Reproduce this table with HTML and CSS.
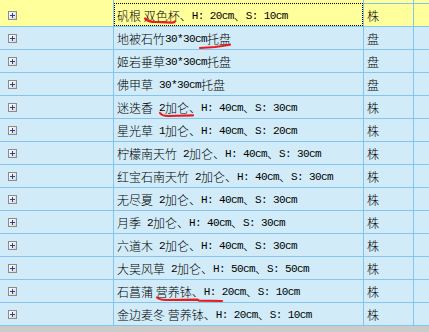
FILE: index.html
```html
<!DOCTYPE html>
<html lang="zh">
<head>
<meta charset="utf-8">
<link rel="stylesheet" href="styles.css">
</head>
<body>
<div class="wrap">
  <div class="grid">
    <div class="row sel">
      <div class="c c1"><span class="exp"></span></div>
      <div class="c c2"><span class="focus"></span>矾根 双色杯、<span class="n">H: 20cm</span>、<span class="n">S: 10cm</span></div>
      <div class="c c3">株</div>
      <div class="c c4"></div>
    </div>
    <div class="row">
      <div class="c c1"><span class="exp"></span></div>
      <div class="c c2">地被石竹<span class="n">30*30cm</span>托盘</div>
      <div class="c c3">盘</div>
      <div class="c c4"></div>
    </div>
    <div class="row">
      <div class="c c1"><span class="exp"></span></div>
      <div class="c c2">姬岩垂草<span class="n">30*30cm</span>托盘</div>
      <div class="c c3">盘</div>
      <div class="c c4"></div>
    </div>
    <div class="row">
      <div class="c c1"><span class="exp"></span></div>
      <div class="c c2">佛甲草<span class="n"> 30*30cm</span>托盘</div>
      <div class="c c3">盘</div>
      <div class="c c4"></div>
    </div>
    <div class="row">
      <div class="c c1"><span class="exp"></span></div>
      <div class="c c2">迷迭香<span class="n"> 2</span>加仑、<span class="n">H: 40cm</span>、<span class="n">S: 30cm</span></div>
      <div class="c c3">株</div>
      <div class="c c4"></div>
    </div>
    <div class="row">
      <div class="c c1"><span class="exp"></span></div>
      <div class="c c2">星光草<span class="n"> 1</span>加仑、<span class="n">H: 40cm</span>、<span class="n">S: 20cm</span></div>
      <div class="c c3">株</div>
      <div class="c c4"></div>
    </div>
    <div class="row">
      <div class="c c1"><span class="exp"></span></div>
      <div class="c c2">柠檬南天竹<span class="n"> 2</span>加仑、<span class="n">H: 40cm</span>、<span class="n">S: 30cm</span></div>
      <div class="c c3">株</div>
      <div class="c c4"></div>
    </div>
    <div class="row">
      <div class="c c1"><span class="exp"></span></div>
      <div class="c c2">红宝石南天竹<span class="n"> 2</span>加仑、<span class="n">H: 40cm</span>、<span class="n">S: 30cm</span></div>
      <div class="c c3">株</div>
      <div class="c c4"></div>
    </div>
    <div class="row">
      <div class="c c1"><span class="exp"></span></div>
      <div class="c c2">无尽夏<span class="n"> 2</span>加仑、<span class="n">H: 40cm</span>、<span class="n">S: 30cm</span></div>
      <div class="c c3">株</div>
      <div class="c c4"></div>
    </div>
    <div class="row">
      <div class="c c1"><span class="exp"></span></div>
      <div class="c c2">月季<span class="n"> 2</span>加仑、<span class="n">H: 40cm</span>、<span class="n">S: 30cm</span></div>
      <div class="c c3">株</div>
      <div class="c c4"></div>
    </div>
    <div class="row">
      <div class="c c1"><span class="exp"></span></div>
      <div class="c c2">六道木<span class="n"> 2</span>加仑、<span class="n">H: 40cm</span>、<span class="n">S: 30cm</span></div>
      <div class="c c3">株</div>
      <div class="c c4"></div>
    </div>
    <div class="row">
      <div class="c c1"><span class="exp"></span></div>
      <div class="c c2">大吴风草<span class="n"> 2</span>加仑、<span class="n">H: 50cm</span>、<span class="n">S: 50cm</span></div>
      <div class="c c3">株</div>
      <div class="c c4"></div>
    </div>
    <div class="row">
      <div class="c c1"><span class="exp"></span></div>
      <div class="c c2">石菖蒲 营养钵、<span class="n">H: 20cm</span>、<span class="n">S: 10cm</span></div>
      <div class="c c3">株</div>
      <div class="c c4"></div>
    </div>
    <div class="row">
      <div class="c c1"><span class="exp"></span></div>
      <div class="c c2">金边麦冬 营养钵、<span class="n">H: 20cm</span>、<span class="n">S: 10cm</span></div>
      <div class="c c3">株</div>
      <div class="c c4"></div>
    </div>
  </div>
  <svg class="marks" width="429" height="332" viewBox="0 0 429 332">
    <path d="M145 18.5 Q148 22 156 22 L172 22.6 Q174.5 22.6 175 21.5"/>
    <path d="M200 48 L215 47 L222 46 L230 44.6"/>
    <path d="M160 113 Q162 116 168 116 L193 115.4"/>
    <path d="M157 297.5 Q160 300 166 300 L197 299.6 L199 300.6 L222 301"/>
  </svg>
</div>
</body>
</html>
```

FILE: styles.css
```css
html, body {
  margin: 0;
  padding: 0;
  background: #cbcbcb;
}
.wrap {
  position: relative;
  width: 429px;
  height: 332px;
  overflow: hidden;
  background: #cbcbcb;
}
.grid {
  display: flex;
  flex-direction: column;
  font-family: "Noto Sans CJK SC", "Noto Sans", sans-serif;
  font-size: 12px;
  font-weight: 300;
  color: #000;
}
.row {
  display: grid;
  grid-template-columns: 114px 250px 50px 1fr;
  height: 23px;
  background: #d1ecf8;
}
.row.sel {
  height: 27px;
  background: #ffff9c;
}
.c {
  box-sizing: border-box;
  border-bottom: 1px solid #84c4f1;
  border-right: 1px solid #84c4f1;
  display: flex;
  align-items: center;
  padding-top: 1px;
  line-height: 20px;
  white-space: nowrap;
  overflow: hidden;
}
.c1 {
  padding-left: 8px;
}
.c2, .c3 {
  padding-left: 3px;
}
.c4 {
  border-right: none;
}
.sel .c {
  padding-top: 5px;
}
.sel .c3, .sel .c4 {
  background: linear-gradient(to bottom, #ffff9c 0, #ffff9c 3px, #84c4f1 3px, #84c4f1 4px, #ffff9c 4px);
}
.c2 {
  position: relative;
}
.focus {
  position: absolute;
  left: 0;
  right: 0;
  top: 3px;
  bottom: 0;
  border: 1px dotted #000;
  pointer-events: none;
}
.n {
  font-family: "Liberation Mono", "DejaVu Sans Mono", monospace;
  font-size: 11px;
  font-weight: 400;
  letter-spacing: -0.6px;
  white-space: pre;
}
.exp {
  display: block;
  box-sizing: border-box;
  width: 9px;
  height: 9px;
  margin-top: 0;
  border: 1px solid #8b8b8b;
  background:
    linear-gradient(#2c4391, #2c4391) center / 5px 1px no-repeat,
    linear-gradient(#2c4391, #2c4391) center / 1px 5px no-repeat,
    linear-gradient(to bottom right, #ffffff, #d8d8d8);
}
.marks {
  position: absolute;
  left: 0;
  top: 0;
  pointer-events: none;
}
.marks path {
  fill: none;
  stroke: #ec1c1c;
  stroke-width: 2.2;
  stroke-linecap: round;
  stroke-linejoin: round;
}
```
